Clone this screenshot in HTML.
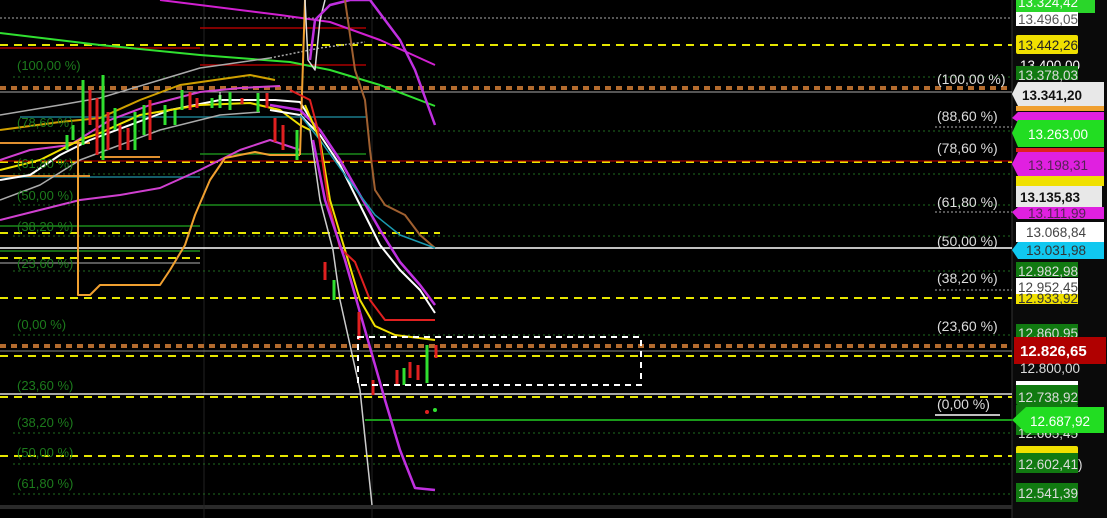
<!DOCTYPE html>
<html><head><meta charset="utf-8"><style>
html,body{margin:0;padding:0;background:#000;width:1107px;height:518px;overflow:hidden}
svg{display:block}
text{font-family:"Liberation Sans",Arial,sans-serif}
</style></head><body>
<svg width="1107" height="518" viewBox="0 0 1107 518" xmlns="http://www.w3.org/2000/svg">
<rect width="1107" height="518" fill="#000"/>
<rect x="1012" y="0" width="95" height="518" fill="#0a0a0a"/>
<line x1="1012" y1="0" x2="1012" y2="518" stroke="#333" stroke-width="1"/>
<rect x="0" y="505" width="1012" height="4" fill="#2a2a2a"/>
<line x1="204" y1="0" x2="204" y2="518" stroke="#222"/>
<line x1="372" y1="0" x2="372" y2="518" stroke="#222"/>
<g stroke="#1f6b1f" stroke-width="1" stroke-dasharray="2,3">
<line x1="13" y1="77" x2="1012" y2="77"/><line x1="13" y1="131" x2="1012" y2="131"/>
<line x1="13" y1="174" x2="1012" y2="174"/><line x1="13" y1="205" x2="1012" y2="205"/>
<line x1="13" y1="236" x2="1012" y2="236"/><line x1="13" y1="271" x2="1012" y2="271"/>
<line x1="13" y1="335" x2="1012" y2="335"/><line x1="13" y1="433" x2="1012" y2="433"/>
<line x1="13" y1="464" x2="1012" y2="464"/><line x1="13" y1="494" x2="1012" y2="494"/>
</g>
<g stroke="#aaa" stroke-width="1" stroke-dasharray="2,2">
<line x1="0" y1="18" x2="1012" y2="18"/>
<line x1="935" y1="127" x2="1012" y2="127"/><line x1="935" y1="212" x2="1012" y2="212"/>
<line x1="935" y1="290" x2="1012" y2="290"/>
</g>
<g stroke="#e6e600" stroke-width="2" stroke-dasharray="8,6">
<line x1="0" y1="45" x2="1012" y2="45"/><line x1="0" y1="298" x2="1012" y2="298"/>
<line x1="0" y1="356" x2="1012" y2="356"/><line x1="0" y1="397" x2="1012" y2="397"/>
<line x1="0" y1="456" x2="1012" y2="456"/><line x1="0" y1="258" x2="200" y2="258"/>
<line x1="0" y1="233" x2="440" y2="233"/><line x1="0" y1="162" x2="1012" y2="162"/>
</g>
<line x1="0" y1="161" x2="1012" y2="161" stroke="#c00" stroke-width="1"/>
<g stroke="#b36b2e" stroke-width="4" stroke-dasharray="6,5">
<line x1="0" y1="88" x2="1012" y2="88"/><line x1="0" y1="346" x2="1012" y2="346"/>
</g>
<line x1="0" y1="92" x2="1012" y2="92" stroke="#aaa" stroke-width="1"/>
<line x1="0" y1="351" x2="1012" y2="351" stroke="#888" stroke-width="1"/>
<line x1="0" y1="248" x2="1012" y2="248" stroke="#fff" stroke-width="1.5"/>
<line x1="0" y1="394" x2="1012" y2="394" stroke="#ddd" stroke-width="1.5"/>
<line x1="935" y1="415" x2="1000" y2="415" stroke="#fff" stroke-width="1.5"/>
<line x1="365" y1="420" x2="1012" y2="420" stroke="#1a9a1a" stroke-width="2"/>
<g stroke-width="1.5">
<line x1="0" y1="48" x2="200" y2="48" stroke="#a00"/>
<line x1="200" y1="28" x2="366" y2="28" stroke="#a00"/>
<line x1="200" y1="65" x2="366" y2="65" stroke="#a00"/>
<line x1="20" y1="117" x2="366" y2="117" stroke="#1a7a8a"/>
<line x1="0" y1="177" x2="200" y2="177" stroke="#1a7a8a"/>
<line x1="200" y1="154" x2="366" y2="154" stroke="#1a8a1a"/>
<line x1="200" y1="205" x2="366" y2="205" stroke="#1a8a1a"/>
<line x1="0" y1="226" x2="200" y2="226" stroke="#1a8a1a"/>
<line x1="0" y1="251" x2="200" y2="251" stroke="#1a8a1a"/>
<line x1="0" y1="263" x2="200" y2="263" stroke="#777"/>
<line x1="0" y1="143" x2="90" y2="143" stroke="#e09030" stroke-width="2"/>
<line x1="0" y1="176" x2="90" y2="176" stroke="#e09030" stroke-width="2"/>
<line x1="100" y1="157" x2="160" y2="157" stroke="#e09030" stroke-width="2"/>
</g>
<g fill="none" stroke-linejoin="round">
<polyline points="160,0 280,15 330,22 380,40 435,65" stroke="#d020d0" stroke-width="2"/>
<polyline points="0,33 100,45 200,55 290,62 330,70 380,85 435,106" stroke="#30e030" stroke-width="2"/>
<polyline points="0,115 60,105 100,98 160,80 200,68 270,58" stroke="#aaa" stroke-width="1.5"/>
<polyline points="270,58 320,48 365,42" stroke="#aaa" stroke-width="1.5" stroke-dasharray="2,2"/>
<polyline points="0,200 40,185 80,160 120,145 160,130 220,115 260,112" stroke="#aaa" stroke-width="1.5"/>
<polyline points="0,160 30,150 70,145 110,120 150,105 200,92 240,88 280,86" stroke="#d040d0" stroke-width="2"/>
<polyline points="0,180 30,175 60,155 90,140 130,125 170,110 220,100 260,100 275,100 300,102 310,118" stroke="#fff" stroke-width="2"/>
<polyline points="0,170 40,160 80,140 100,133 140,115 200,105 250,103 280,110 300,125 310,130" stroke="#f0e000" stroke-width="2"/>
<polyline points="0,130 60,122 100,118 140,100 180,85 250,75 275,80" stroke="#d0a000" stroke-width="2"/>
<polyline points="0,220 40,210 80,200 120,195 160,188 200,170 240,150 270,140 300,150" stroke="#d040d0" stroke-width="2"/>
<polyline points="78,140 78,295 90,295 100,285 160,285 170,270 185,245 195,215 210,180 225,158 255,152 270,155 300,155" stroke="#f0a030" stroke-width="2"/>
<polyline points="300,155 305,0" stroke="#f0a030" stroke-width="2"/>
<polyline points="305,0 308,60 315,70 320,20 325,0" stroke="#ddd" stroke-width="1.5"/>
<polyline points="310,60 315,20 330,5 350,0 370,0 385,20 400,40 415,70 435,125" stroke="#c030e0" stroke-width="2.5"/>
<polyline points="345,0 355,70 365,100 370,150 375,190 385,205 405,215 420,235 435,248" stroke="#a06030" stroke-width="2"/>
<polyline points="270,105 300,110 320,130 340,160 360,195 380,230 400,262 420,285 435,305" stroke="#c030e0" stroke-width="2.5"/>
<polyline points="270,110 300,115 320,135 340,165 360,205 380,245 400,270 420,290 435,313" stroke="#fff" stroke-width="2"/>
<polyline points="300,115 320,140 345,175 375,215 400,235 435,248" stroke="#1a9ab0" stroke-width="1.5"/>
<polyline points="305,105 320,140 330,200 345,250 360,300 375,326 395,335 435,340" stroke="#f0e000" stroke-width="2"/>
<polyline points="290,90 310,100 318,130 328,200 340,248 355,262 370,300 385,320 435,320" stroke="#e02020" stroke-width="2"/>
<polyline points="310,130 320,200 333,250 340,300 360,390 372,505" stroke="#ccc" stroke-width="1.5"/>
<polyline points="313,140 325,200 345,260 365,330 385,400 400,450 415,488 435,490" stroke="#c030e0" stroke-width="2.5"/>
</g>
<g stroke-width="3">
<line x1="67" y1="135" x2="67" y2="150" stroke="#30e030"/><line x1="73" y1="125" x2="73" y2="140" stroke="#30e030"/>
<line x1="83" y1="80" x2="83" y2="145" stroke="#30e030"/><line x1="90" y1="90" x2="90" y2="125" stroke="#e02020"/>
<line x1="97" y1="98" x2="97" y2="155" stroke="#e02020"/><line x1="103" y1="75" x2="103" y2="160" stroke="#30e030"/>
<line x1="108" y1="112" x2="108" y2="150" stroke="#e02020"/>
<line x1="115" y1="108" x2="115" y2="130" stroke="#30e030"/><line x1="120" y1="125" x2="120" y2="150" stroke="#e02020"/>
<line x1="128" y1="128" x2="128" y2="150" stroke="#e02020"/><line x1="135" y1="112" x2="135" y2="150" stroke="#30e030"/>
<line x1="144" y1="105" x2="144" y2="135" stroke="#30e030"/><line x1="150" y1="100" x2="150" y2="140" stroke="#e02020"/>
<line x1="165" y1="105" x2="165" y2="125" stroke="#30e030"/><line x1="175" y1="110" x2="175" y2="125" stroke="#30e030"/>
<line x1="182" y1="90" x2="182" y2="110" stroke="#30e030"/><line x1="190" y1="92" x2="190" y2="110" stroke="#e02020"/>
<line x1="197" y1="98" x2="197" y2="108" stroke="#e02020"/><line x1="212" y1="98" x2="212" y2="108" stroke="#30e030"/>
<line x1="220" y1="95" x2="220" y2="108" stroke="#30e030"/><line x1="230" y1="92" x2="230" y2="110" stroke="#30e030"/>
<line x1="242" y1="98" x2="242" y2="104" stroke="#e02020"/><line x1="258" y1="93" x2="258" y2="112" stroke="#30e030"/>
<line x1="267" y1="93" x2="267" y2="108" stroke="#e02020"/>
<line x1="275" y1="118" x2="275" y2="142" stroke="#e02020"/><line x1="283" y1="125" x2="283" y2="150" stroke="#e02020"/><line x1="297" y1="130" x2="297" y2="160" stroke="#30e030"/>
<line x1="325" y1="262" x2="325" y2="280" stroke="#e02020"/><line x1="334" y1="280" x2="334" y2="300" stroke="#30e030"/>
<line x1="359" y1="312" x2="359" y2="340" stroke="#e02020"/><line x1="373" y1="380" x2="373" y2="395" stroke="#e02020"/>
<line x1="397" y1="370" x2="397" y2="386" stroke="#e02020"/><line x1="404" y1="368" x2="404" y2="385" stroke="#30e030"/>
<line x1="410" y1="362" x2="410" y2="378" stroke="#e02020"/><line x1="418" y1="365" x2="418" y2="380" stroke="#e02020"/>
<line x1="427" y1="345" x2="427" y2="383" stroke="#30e030"/><line x1="436" y1="345" x2="436" y2="358" stroke="#e02020"/>
</g>
<line x1="220" y1="92" x2="220" y2="100" stroke="#fff" stroke-width="1"/>
<circle cx="427" cy="412" r="2" fill="#e02020"/><circle cx="435" cy="410" r="2" fill="#30e030"/>
<rect x="358" y="337" width="283" height="48" fill="none" stroke="#fff" stroke-width="2" stroke-dasharray="6,5"/>
<g font-size="13" fill="#1c7a1c">
<text x="17" y="70">(100,00 %)</text><text x="17" y="127">(78,60 %)</text>
<text x="17" y="168">(61,80 %)</text><text x="17" y="200">(50,00 %)</text>
<text x="17" y="231">(38,20 %)</text><text x="17" y="268">(23,60 %)</text>
<text x="17" y="329">(0,00 %)</text><text x="17" y="390">(23,60 %)</text>
<text x="17" y="427">(38,20 %)</text><text x="17" y="457">(50,00 %)</text>
<text x="17" y="488">(61,80 %)</text>
</g>
<g font-size="14" fill="#ddd">
<text x="937" y="84">(100,00 %)</text><text x="937" y="121">(88,60 %)</text>
<text x="937" y="153">(78,60 %)</text><text x="937" y="207">(61,80 %)</text>
<text x="937" y="246">(50,00 %)</text><text x="937" y="283">(38,20 %)</text>
<text x="937" y="331">(23,60 %)</text><text x="937" y="409">(0,00 %)</text>
</g>
<g font-size="13.5">
<rect x="1016" y="-6" width="79" height="19" fill="#2ad62a"/><text x="1018" y="7" fill="#fff">13.324,42</text>
<rect x="1016" y="12" width="62" height="14" fill="#fff"/><text x="1018" y="24" fill="#555">13.496,05</text>
<rect x="1016" y="35" width="62" height="19" rx="2" fill="#f0e000"/><text x="1018" y="50" fill="#222">13.442,26</text>
<text x="1020" y="70" fill="#fff">13.400,00</text>
<rect x="1016" y="66" width="62" height="14" fill="#117a11"/><text x="1018" y="80" fill="#ddd">13.378,03</text>
<polygon points="1012,94 1018,82 1104,82 1104,106 1018,106" fill="#e8e8e8"/><text x="1022" y="100" fill="#111" font-weight="bold">13.341,20</text>
<rect x="1016" y="106" width="88" height="5" fill="#f0a030"/>
<polygon points="1012,118 1018,112 1104,112 1104,122 1018,122" fill="#e020e0"/>
<polygon points="1012,133 1018,120 1104,120 1104,147 1018,147" fill="#22dd22"/><text x="1028" y="139" fill="#fff">13.263,00</text>
<rect x="1016" y="148" width="88" height="4" fill="#e02020"/>
<polygon points="1012,164 1018,152 1104,152 1104,176 1018,176" fill="#e020e0"/><text x="1028" y="170" fill="#552255">13.198,31</text>
<rect x="1016" y="176" width="88" height="10" fill="#f0e000"/>
<rect x="1016" y="186" width="86" height="21" fill="#e8e8e8"/><text x="1020" y="202" fill="#111" font-weight="bold">13.135,83</text>
<polygon points="1012,212 1018,207 1104,207 1104,219 1018,219" fill="#e020e0"/><text x="1028" y="218" fill="#552255">13.111,99</text>
<rect x="1016" y="222" width="88" height="20" fill="#fff"/><text x="1026" y="237" fill="#444">13.068,84</text>
<polygon points="1012,250 1018,242 1104,242 1104,259 1018,259" fill="#10c8f0"/><text x="1026" y="255" fill="#333">13.031,98</text>
<rect x="1016" y="262" width="62" height="15" fill="#117a11"/><text x="1018" y="276" fill="#ddd">12.982,98</text>
<rect x="1016" y="278" width="62" height="16" fill="#fff"/><text x="1018" y="292" fill="#444">12.952,45</text>
<rect x="1016" y="294" width="62" height="10" fill="#f0e000"/><text x="1018" y="303" fill="#333">12.933,92</text>
<rect x="1016" y="324" width="62" height="14" fill="#117a11"/><text x="1018" y="338" fill="#ddd">12.860,95</text>
<rect x="1014" y="337" width="92" height="27" fill="#b00000"/><text x="1020" y="356" fill="#fff" font-weight="bold" font-size="15">12.826,65</text>
<text x="1020" y="373" fill="#ddd">12.800,00</text>
<rect x="1016" y="381" width="62" height="24" rx="2" fill="#117a11"/><rect x="1016" y="381" width="62" height="4" fill="#fff"/><text x="1018" y="402" fill="#ddd">12.738,92</text>
<rect x="1016" y="405" width="62" height="30" fill="#117a11"/><text x="1018" y="438" fill="#ddd">12.665,45</text>
<polygon points="1012,420 1026,407 1104,407 1104,433 1026,433" fill="#22dd22"/><text x="1030" y="426" fill="#fff">12.687,92</text>
<rect x="1016" y="446" width="62" height="10" rx="2" fill="#f0e000"/>
<rect x="1016" y="453" width="62" height="20" fill="#117a11"/><text x="1018" y="469" fill="#ddd">12.602,41)</text>
<rect x="1016" y="483" width="62" height="19" fill="#117a11"/><text x="1018" y="498" fill="#ddd">12.541,39</text>
</g>
</svg>
</body></html>
